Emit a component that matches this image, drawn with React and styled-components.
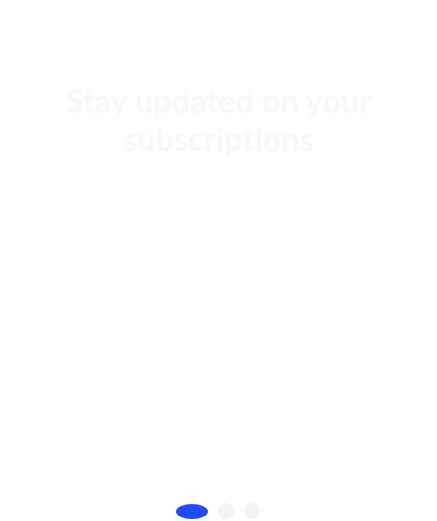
import React from 'react';
import styled, { createGlobalStyle } from 'styled-components';

const Global = createGlobalStyle`
html, body {
  margin: 0;
  padding: 0;
  background: #ffffff;
}
body {
  font-family: "Lato", "Open Sans", sans-serif;
}
`

const Screen = styled.div`
height: 521px;
display: flex;
flex-direction: column;
justify-content: space-between;
align-items: center;
box-sizing: border-box;
padding: 82px 30px 2px;
`

const Title = styled.h1`
margin: 0;
font-family: "Lato", "Open Sans", sans-serif;
font-size: 32px;
line-height: 38px;
font-weight: 700;
letter-spacing: 0.2px;
color: #f8f8f8;
text-align: center;
max-width: 330px;
`

const Dots = styled.div`
display: flex;
align-items: center;
gap: 10px;
margin-right: 2px;
`

const Dot = styled.span`
display: block;
width: ${props => props.$active ? '32px' : '16px'};
height: ${props => props.$active ? '15px' : '16px'};
border-radius: 50%;
background: ${props => props.$active ? '#1f4cff' : '#f3f3f3'};
`

export default function App() {
  return (
    <>
      <Global />
      <Screen>
        <Title>Stay updated on your subscriptions</Title>
        <Dots>
          <Dot $active />
          <Dot />
          <Dot />
        </Dots>
      </Screen>
    </>
  );
}
